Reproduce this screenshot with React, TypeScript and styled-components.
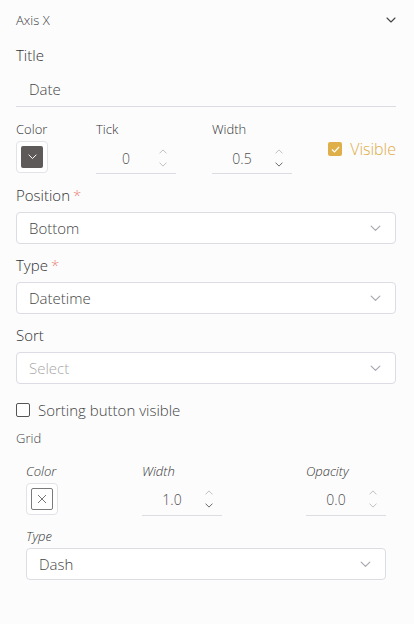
import React from "react";
import styled, { createGlobalStyle } from "styled-components";

const GlobalStyle = createGlobalStyle`
  html, body {
    margin: 0;
    padding: 0;
    background: #fcfcfd;
  }
  body {
    font-family: "Open Sans", "Liberation Sans", sans-serif;
    font-weight: 300;
    color: #4f4f4f;
  }
`;

const Panel = styled.div`
  width: 414px;
  height: 624px;
  box-sizing: border-box;
  padding: 0 18px 0 16px;
  background: #fcfcfd;
`;

const Header = styled.div`
  height: 40px;
  display: flex;
  align-items: center;
  justify-content: space-between;
  font-size: 13px;
  color: #3a3a3a;
`;

const Label = styled.div<{ $gap?: number; $top?: number }>`
  font-size: 15px;
  line-height: 18px;
  color: #333;
  margin-top: ${(p) => p.$top ?? 0}px;
  margin-bottom: ${(p) => p.$gap ?? 8}px;
`;

const SmallLabel = styled.div<{ $italic?: boolean }>`
  font-size: 13px;
  line-height: 16px;
  color: #333;
  font-style: ${(p) => (p.$italic ? "italic" : "normal")};
  margin-bottom: 4px;
`;

const Star = styled.span`
  color: #e8857a;
  margin-left: 3px;
`;

const TextInput = styled.div`
  height: 36px;
  box-sizing: border-box;
  border-bottom: 1px solid #dcdce3;
  padding-left: 13px;
  display: flex;
  align-items: center;
  font-size: 15px;
  color: #444;
`;

const Row = styled.div`
  margin-top: 14px;
  display: grid;
  grid-template-columns: 80px 116px 115px auto;
  align-items: start;
`;

const Cell = styled.div`
  display: flex;
  flex-direction: column;
`;

const Swatch = styled.div`
  width: 32px;
  height: 32px;
  box-sizing: border-box;
  border: 1px solid #e2e2e8;
  border-radius: 4px;
  display: flex;
  align-items: center;
  justify-content: center;
  background: #fff;
`;

const SwatchFill = styled.div<{ $empty?: boolean }>`
  width: 22px;
  height: 22px;
  box-sizing: border-box;
  border-radius: 2px;
  background: ${(p) => (p.$empty ? "#fff" : "#5e5a5a")};
  border: ${(p) => (p.$empty ? "1px solid #7a7a7a" : "none")};
  display: flex;
  align-items: center;
  justify-content: center;
`;

const NumberBox = styled.div<{ $pad?: number }>`
  width: 80px;
  height: 33px;
  box-sizing: border-box;
  border-bottom: 1px solid #dcdce3;
  display: flex;
  align-items: center;
  padding-top: ${(p) => p.$pad ?? 2}px;
`;

const NumberValue = styled.div`
  flex: 1;
  text-align: center;
  font-size: 14px;
  color: #4f4f4f;
  padding-left: 6px;
`;

const Spinner = styled.div`
  width: 26px;
  display: flex;
  flex-direction: column;
  align-items: center;
  gap: 8px;
`;

const VisibleBox = styled.label`
  display: flex;
  align-items: center;
  gap: 8px;
  margin-top: 17px;
  font-size: 16px;
  font-weight: 300;
  color: #deac45;
  justify-self: end;
`;

const CheckMark = styled.span<{ $on?: boolean }>`
  width: 14px;
  height: 14px;
  box-sizing: border-box;
  border-radius: 2px;
  background: ${(p) => (p.$on ? "#dfb04a" : "#fff")};
  border: ${(p) => (p.$on ? "none" : "1.5px solid #555")};
  display: flex;
  align-items: center;
  justify-content: center;
`;

const Select = styled.div<{ $placeholder?: boolean }>`
  height: 32px;
  box-sizing: border-box;
  border: 1px solid #dcdce4;
  border-radius: 4px;
  background: #fff;
  display: flex;
  align-items: center;
  justify-content: space-between;
  padding: 0 14px 0 12px;
  font-size: 15px;
  color: ${(p) => (p.$placeholder ? "#a8a8a8" : "#444")};
`;

const Block = styled.div<{ $top?: number }>`
  margin-top: ${(p) => p.$top ?? 0}px;
`;

const CheckRow = styled.label`
  margin-top: 18px;
  height: 16px;
  display: flex;
  align-items: center;
  gap: 8px;
  font-size: 15px;
  color: #444;
`;

const GridTitle = styled.div`
  margin-top: 12px;
  font-size: 13px;
  line-height: 16px;
  color: #444;
`;

const GridSection = styled.div`
  padding: 0 10px;
`;

const GridRow = styled.div`
  margin-top: 17px;
  display: flex;
  justify-content: space-between;
  align-items: flex-start;
`;

const Chevron = ({ up, color = "#999", w = 9 }: { up?: boolean; color?: string; w?: number }) => (
  <svg width={w} height={w / 2 + 1} viewBox="0 0 10 6" fill="none" style={{ display: "block" }}>
    <path
      d={up ? "M1 5L5 1L9 5" : "M1 1L5 5L9 1"}
      stroke={color}
      strokeWidth="1.1"
      strokeLinecap="round"
      strokeLinejoin="round"
    />
  </svg>
);

const Num = ({ value, darkDown, pad }: { value: string; darkDown?: boolean; pad?: number }) => (
  <NumberBox $pad={pad}>
    <NumberValue>{value}</NumberValue>
    <Spinner>
      <Chevron up color="#b8b8b8" w={8} />
      <Chevron color={darkDown ? "#555" : "#b8b8b8"} w={8} />
    </Spinner>
  </NumberBox>
);

const SelectField = ({ value, placeholder }: { value: string; placeholder?: boolean }) => (
  <Select $placeholder={placeholder}>
    <span>{value}</span>
    <Chevron color="#a8a8b0" w={11} />
  </Select>
);

export default function App() {
  return (
    <>
      <GlobalStyle />
      <Panel>
        <Header>
          <span>Axis X</span>
          <Chevron color="#444" w={10} />
        </Header>

        <Label $top={6} $gap={7}>Title</Label>
        <TextInput>Date</TextInput>

        <Row>
          <Cell>
            <SmallLabel>Color</SmallLabel>
            <Swatch>
              <SwatchFill>
                <Chevron color="#fff" w={9} />
              </SwatchFill>
            </Swatch>
          </Cell>
          <Cell>
            <SmallLabel>Tick</SmallLabel>
            <Num value="0" />
          </Cell>
          <Cell>
            <SmallLabel>Width</SmallLabel>
            <Num value="0.5" darkDown />
          </Cell>
          <VisibleBox>
            <CheckMark $on>
              <svg width="9" height="7" viewBox="0 0 9 7" fill="none">
                <path d="M1 3.5L3.5 6L8 1" stroke="#fff" strokeWidth="1.2" />
              </svg>
            </CheckMark>
            Visible
          </VisibleBox>
        </Row>

        <Block $top={12}>
          <Label>
            Position<Star>*</Star>
          </Label>
          <SelectField value="Bottom" />
        </Block>

        <Block $top={12}>
          <Label>
            Type<Star>*</Star>
          </Label>
          <SelectField value="Datetime" />
        </Block>

        <Block $top={12}>
          <Label>Sort</Label>
          <SelectField value="Select" placeholder />
        </Block>

        <CheckRow>
          <CheckMark />
          Sorting button visible
        </CheckRow>

        <GridTitle>Grid</GridTitle>

        <GridSection>
          <GridRow>
            <Cell>
              <SmallLabel $italic>Color</SmallLabel>
              <Swatch>
                <SwatchFill $empty>
                  <svg width="10" height="10" viewBox="0 0 10 10">
                    <path d="M1 1L9 9M9 1L1 9" stroke="#777" strokeWidth="1" />
                  </svg>
                </SwatchFill>
              </Swatch>
            </Cell>
            <Cell>
              <SmallLabel $italic>Width</SmallLabel>
              <Num value="1.0" darkDown pad={0} />
            </Cell>
            <Cell>
              <SmallLabel $italic>Opacity</SmallLabel>
              <Num value="0.0" pad={0} />
            </Cell>
          </GridRow>

          <Block $top={12}>
            <SmallLabel $italic>Type</SmallLabel>
            <SelectField value="Dash" />
          </Block>
        </GridSection>
      </Panel>
    </>
  );
}
